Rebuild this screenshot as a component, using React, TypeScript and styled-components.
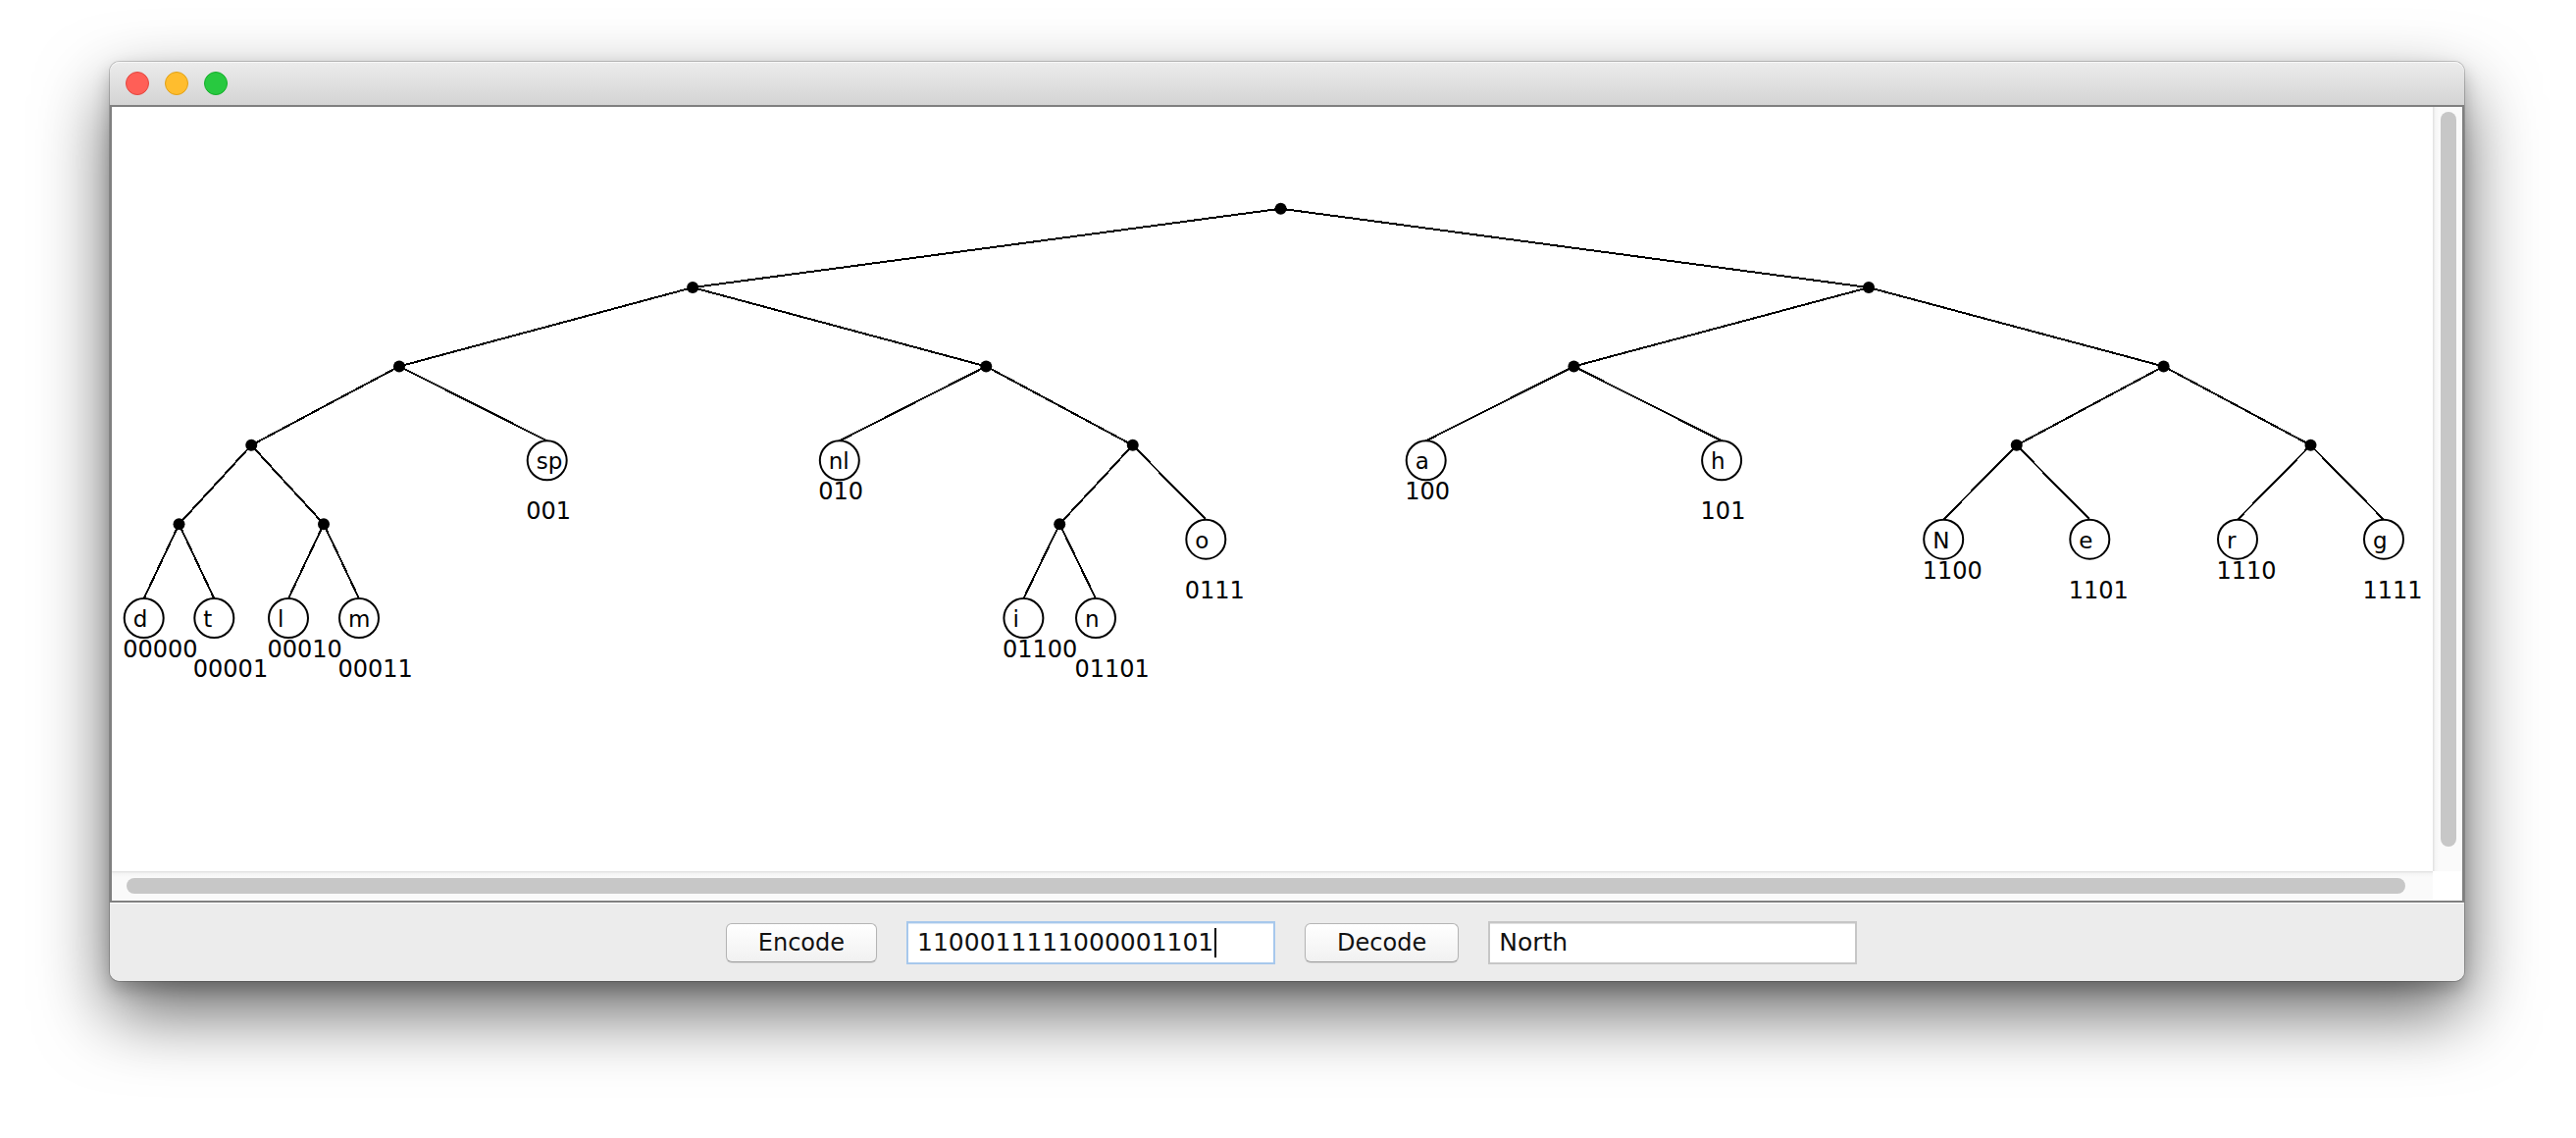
import React from 'react';
import styled, { createGlobalStyle } from 'styled-components';

const GlobalStyle = createGlobalStyle`
  html, body { margin: 0; padding: 0; background: #ffffff; }
  body {
    width: 2626px;
    height: 1160px;
    overflow: hidden;
    font-family: "DejaVu Sans", "Liberation Sans", sans-serif;
  }
`;

const Page = styled.div`
  width: 2626px;
  height: 1160px;
  box-sizing: border-box;
  padding: 63px 0 0 112px;
  display: flex;
  align-items: flex-start;
`;

const Window = styled.div`
  width: 2400px;
  height: 937px;
  display: flex;
  flex-direction: column;
  border-radius: 10px;
  background: #ececec;
  box-shadow: 0 0 0 1px rgba(0, 0, 0, 0.18), 0 32px 72px rgba(0, 0, 0, 0.6),
    0 8px 18px rgba(0, 0, 0, 0.22);
`;

const TitleBar = styled.div`
  height: 44px;
  flex: none;
  box-sizing: border-box;
  display: flex;
  align-items: center;
  gap: 16px;
  padding-left: 16px;
  border-radius: 10px 10px 0 0;
  background: linear-gradient(#ececec, #d4d4d4);
  box-shadow: inset 0 1px 0 #f7f7f7;
`;

const Light = styled.span<{ $fill: string; $edge: string }>`
  width: 24px;
  height: 24px;
  box-sizing: border-box;
  border-radius: 50%;
  background: ${(p) => p.$fill};
  border: 1px solid ${(p) => p.$edge};
`;

const ScrollPane = styled.div`
  flex: 1;
  min-height: 0;
  border: 2px solid #808080;
  display: grid;
  grid-template-columns: 1fr 30px;
  grid-template-rows: 1fr 30px;
  background: #ffffff;
`;

const Viewport = styled.div`
  overflow: hidden;
  background: #ffffff;
`;

const VTrack = styled.div`
  box-sizing: border-box;
  padding: 5px 0 25px 8px;
  display: flex;
  background: linear-gradient(to right, #e4e4e4 0, #e4e4e4 1px, #f4f4f4 2px, #fafafa 6px, #fafafa 100%);
`;

const VThumb = styled.div`
  width: 16px;
  border-radius: 8px;
  background: #c7c7c7;
`;

const HTrack = styled.div`
  box-sizing: border-box;
  padding: 7px 28px 7px 15px;
  display: flex;
  background: linear-gradient(#e4e4e4 0, #e4e4e4 1px, #f4f4f4 2px, #fafafa 6px, #fafafa 100%);
`;

const HThumb = styled.div`
  flex: 1;
  border-radius: 8px;
  background: #c7c7c7;
`;

const Corner = styled.div`
  background: #ffffff;
`;

const BottomPanel = styled.div`
  height: 80px;
  flex: none;
  box-sizing: border-box;
  border-top: 1px solid #ffffff;
  border-radius: 0 0 10px 10px;
  background: #ececec;
  display: flex;
  align-items: center;
  justify-content: center;
  gap: 30px;
  padding-left: 9px;
`;

const Button = styled.button`
  height: 40px;
  box-sizing: border-box;
  padding: 0 32px;
  border: 1px solid #b4b4b4;
  border-bottom-color: #9c9c9c;
  border-radius: 6px;
  background: linear-gradient(#ffffff, #f1f1f1);
  box-shadow: 0 1px 1px rgba(0, 0, 0, 0.08);
  font-family: "DejaVu Sans", sans-serif;
  font-size: 24px;
  color: #111111;
  line-height: 1;
`;

const Field = styled.div<{ $focused?: boolean }>`
  width: 376px;
  height: 44px;
  box-sizing: border-box;
  display: flex;
  align-items: center;
  padding-left: 9px;
  background: #ffffff;
  border: 2px solid ${(p) => (p.$focused ? '#a7c8ec' : '#c6c6c6')};
  box-shadow: inset 0 1px 0 ${(p) => (p.$focused ? '#dbe8f6' : '#e2e2e2')};
  font-family: "DejaVu Sans", sans-serif;
  font-size: 25px;
  color: #111111;
  white-space: pre;
`;

const Caret = styled.span`
  width: 2px;
  height: 30px;
  margin-left: 1px;
  background: #000000;
`;

const TreeSvg = styled.svg`
  display: block;
`;

/* ---------- Huffman tree data ---------- */

type Leaf = { kind: 'leaf'; ch: string; x: number };
type Inner = { kind: 'inner'; left: Node; right: Node };
type Node = Leaf | Inner;

const leaf = (ch: string, x: number): Leaf => ({ kind: 'leaf', ch, x });
const inner = (left: Node, right: Node): Inner => ({ kind: 'inner', left, right });

const tree: Node = inner(
  inner(
    inner(
      inner(
        inner(leaf('d', 146.7), leaf('t', 218.3)),
        inner(leaf('l', 294), leaf('m', 366))
      ),
      leaf('sp', 557.7)
    ),
    inner(
      leaf('nl', 855.8),
      inner(inner(leaf('i', 1043.4), leaf('n', 1117)), leaf('o', 1229.3))
    )
  ),
  inner(
    inner(leaf('a', 1453.7), leaf('h', 1755.1)),
    inner(
      inner(leaf('N', 1981.2), leaf('e', 2130.3)),
      inner(leaf('r', 2281), leaf('g', 2430))
    )
  )
);

const levelY = (d: number) => 212.7 + 80.38 * d;
const R = 20;

function nodeX(n: Node): number {
  return n.kind === 'leaf' ? n.x : (nodeX(n.left) + nodeX(n.right)) / 2;
}

type Parts = {
  lines: React.ReactNode[];
  dots: React.ReactNode[];
  leaves: React.ReactNode[];
};

function collect(n: Node, depth: number, code: string, parts: Parts) {
  const x = nodeX(n);
  const y = levelY(depth);
  if (n.kind === 'leaf') {
    const cy = y + 15.5;
    parts.leaves.push(
      <g key={code}>
        <circle cx={x} cy={cy} r={R} fill="#ffffff" stroke="#000000" strokeWidth={2} />
        <text x={x - 11} y={cy + 9} fontSize={23}>
          {n.ch}
        </text>
        <text x={x - 21.5} y={cy + (code.endsWith('1') ? 60 : 40)} fontSize={24}>
          {code}
        </text>
      </g>
    );
    return;
  }
  parts.dots.push(<circle key={code || 'root'} cx={x} cy={y} r={6} fill="#000000" />);
  ([
    [n.left, '0'],
    [n.right, '1'],
  ] as [Node, string][]).forEach(([child, bit]) => {
    const cx = nodeX(child);
    const cy = child.kind === 'leaf' ? levelY(depth + 1) - 4.5 : levelY(depth + 1);
    parts.lines.push(
      <line key={code + bit} x1={x} y1={y} x2={cx} y2={cy} stroke="#000000" strokeWidth={2} />
    );
    collect(child, depth + 1, code + bit, parts);
  });
}

function HuffmanTree() {
  const parts: Parts = { lines: [], dots: [], leaves: [] };
  collect(tree, 0, '', parts);
  return (
    <TreeSvg width={2366} height={779} viewBox="114 109 2366 779">
      <g fontFamily='"DejaVu Sans", sans-serif' fill="#000000">
        <g shapeRendering="crispEdges">{parts.lines}</g>
        {parts.dots}
        {parts.leaves}
      </g>
    </TreeSvg>
  );
}

export default function App() {
  return (
    <>
      <GlobalStyle />
      <Page>
        <Window>
          <TitleBar>
            <Light $fill="#ff5f57" $edge="#e2463f" />
            <Light $fill="#ffbd2e" $edge="#e1a116" />
            <Light $fill="#28c940" $edge="#14ae2a" />
          </TitleBar>
          <ScrollPane>
            <Viewport>
              <HuffmanTree />
            </Viewport>
            <VTrack>
              <VThumb />
            </VTrack>
            <HTrack>
              <HThumb />
            </HTrack>
            <Corner />
          </ScrollPane>
          <BottomPanel>
            <Button>Encode</Button>
            <Field $focused>
              1100011111000001101
              <Caret />
            </Field>
            <Button>Decode</Button>
            <Field>North</Field>
          </BottomPanel>
        </Window>
      </Page>
    </>
  );
}
